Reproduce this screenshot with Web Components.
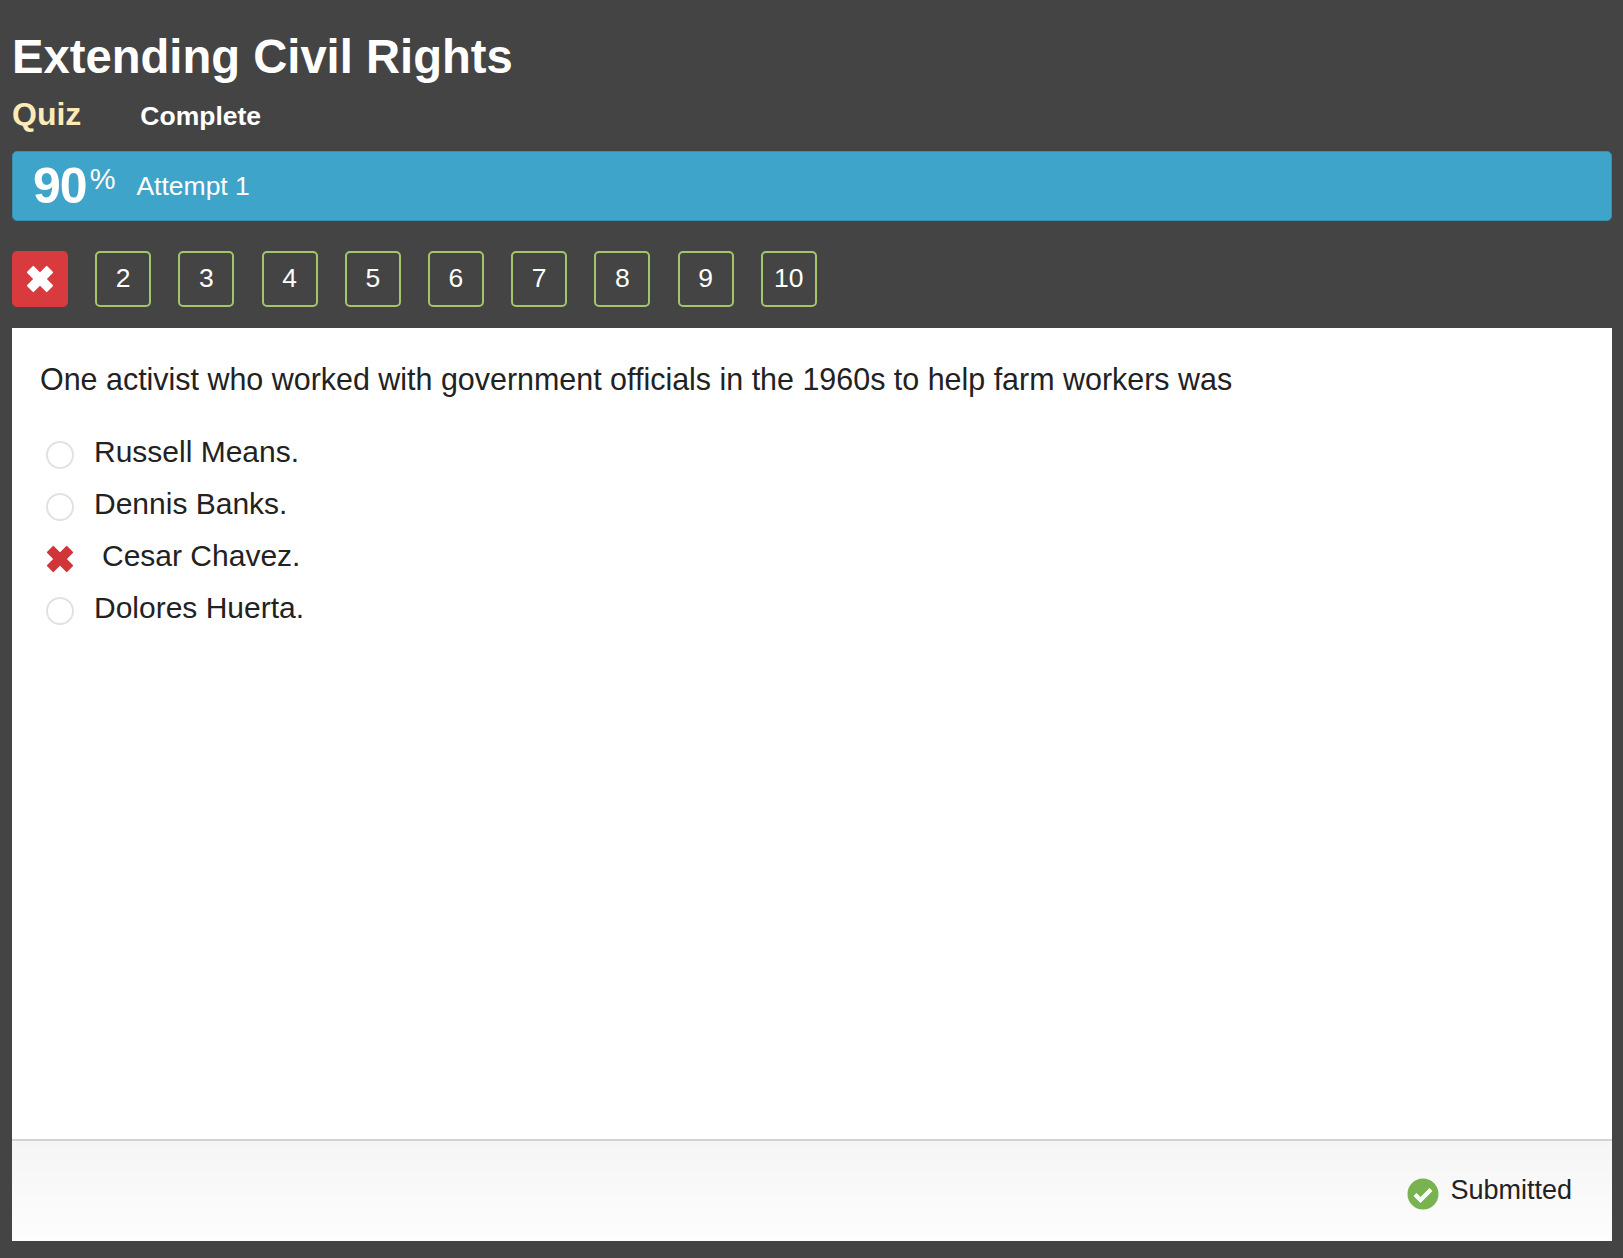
<!DOCTYPE html>
<html>
<head>
<meta charset="utf-8">
<style>
    html, body { margin: 0; background: #444444; }
    body { font-family: "Liberation Sans", Arial, sans-serif; }
</style>
</head>
<body>
<quiz-page>
    <quiz-header title="Extending Civil Rights"></quiz-header>
    <score-bar score="90" attempt="Attempt 1"></score-bar>
    <question-nav></question-nav>
    <question-card>
        <span slot="question">One activist who worked with government officials in the 1960s to help farm workers was</span>
        <answer-option>Russell Means.</answer-option>
        <answer-option>Dennis Banks.</answer-option>
        <answer-option wrong>Cesar Chavez.</answer-option>
        <answer-option>Dolores Huerta.</answer-option>
        <span slot="status">Submitted</span>
    </question-card>
</quiz-page>

<script>
// --- Shared icon ---
const crossIcon = color => `
    <svg viewBox="2.5 2.5 23 23" width="28" height="28" aria-hidden="true">
        <path d="M4 8.5 8.5 4 14 9.5 19.5 4 24 8.5 18.5 14 24 19.5 19.5 24 14 18.5 8.5 24 4 19.5 9.5 14Z"
              fill="${color}" stroke="${color}" stroke-width="1.5" stroke-linejoin="round"/>
    </svg>`;

// --- Page frame ---
class QuizPage extends HTMLElement {
    constructor() {
        super();
        this.attachShadow({ mode: 'open' });
        this.shadowRoot.innerHTML = `
            <style>
                :host {
                    display: block;
                    box-sizing: border-box;
                    height: 1258px;
                    padding: 0 11px 17px 12px;
                }
                .wrap {
                    height: 100%;
                    display: flex;
                    flex-direction: column;
                }
            </style>
            <div class="wrap"><slot></slot></div>
        `;
    }
}
customElements.define('quiz-page', QuizPage);

// --- Title and tabs ---
class QuizHeader extends HTMLElement {
    constructor() {
        super();
        this.attachShadow({ mode: 'open' });
    }

    connectedCallback() {
        this.shadowRoot.innerHTML = `
            <style>
                :host {
                    display: block;
                    padding-top: 29px;
                    height: 123px;
                    box-sizing: border-box;
                }
                h1 {
                    margin: 0;
                    font-size: 47.2px;
                    line-height: 56px;
                    font-weight: bold;
                    color: #fff;
                }
                .tabs {
                    display: flex;
                    align-items: baseline;
                    gap: 59px;
                    margin-top: 12px;
                    font-weight: bold;
                }
                .quiz { font-size: 32px; line-height: 34px; color: #fcebb6; }
                .complete { font-size: 26.5px; line-height: 34px; color: #fff; }
            </style>
            <h1>${this.getAttribute('title')}</h1>
            <div class="tabs">
                <span class="quiz">Quiz</span>
                <span class="complete">Complete</span>
            </div>
        `;
    }
}
customElements.define('quiz-header', QuizHeader);

// --- Blue score bar ---
class ScoreBar extends HTMLElement {
    constructor() {
        super();
        this.attachShadow({ mode: 'open' });
    }

    connectedCallback() {
        this.shadowRoot.innerHTML = `
            <style>
                :host {
                    display: flex;
                    align-items: center;
                    box-sizing: border-box;
                    height: 70px;
                    margin-top: 28px;
                    padding-left: 20px;
                    background: #3fa4c9;
                    border: 1px solid #3a8fb0;
                    border-radius: 5px;
                    color: #fff;
                }
                .score {
                    font-size: 50px;
                    font-weight: bold;
                    letter-spacing: -1px;
                    line-height: 1;
                }
                sup {
                    font-size: 29px;
                    font-weight: normal;
                    letter-spacing: 0;
                    line-height: 0;
                    vertical-align: 14px;
                    margin-left: 3px;
                }
                .attempt {
                    font-size: 26.5px;
                    margin-left: 21px;
                }
            </style>
            <span class="score">${this.getAttribute('score')}<sup>%</sup></span>
            <span class="attempt">${this.getAttribute('attempt')}</span>
        `;
    }
}
customElements.define('score-bar', ScoreBar);

// --- Numbered question squares ---
class QuestionNav extends HTMLElement {
    constructor() {
        super();
        this.attachShadow({ mode: 'open' });
    }

    connectedCallback() {
        let items = `<div class="item wrong">${crossIcon('#fff')}</div>`;
        for (let i = 2; i <= 10; i++) {
            items += `<div class="item">${i}</div>`;
        }
        this.shadowRoot.innerHTML = `
            <style>
                :host {
                    display: flex;
                    gap: 27.2px;
                    margin-top: 30px;
                }
                .item {
                    box-sizing: border-box;
                    width: 56px;
                    height: 56px;
                    display: flex;
                    align-items: center;
                    justify-content: center;
                    padding-bottom: 2px;
                    border: 2px solid #a4c66a;
                    border-radius: 5px;
                    color: #fff;
                    font-size: 26.5px;
                }
                .wrong {
                    background: #d83a3d;
                    border: 0;
                    padding-bottom: 0;
                }
            </style>
            ${items}
        `;
    }
}
customElements.define('question-nav', QuestionNav);

// --- One answer row ---
class AnswerOption extends HTMLElement {
    constructor() {
        super();
        this.attachShadow({ mode: 'open' });
    }

    connectedCallback() {
        const wrong = this.hasAttribute('wrong');
        const mark = wrong ? crossIcon('#d0353a') : '<span class="radio"></span>';
        this.shadowRoot.innerHTML = `
            <style>
                :host {
                    display: flex;
                    align-items: center;
                    height: 52px;
                    font-size: 30px;
                    color: #222;
                }
                .mark {
                    width: 28px;
                    height: 28px;
                    margin-left: 6px;
                    margin-top: 6px;
                    display: flex;
                }
                .radio {
                    box-sizing: border-box;
                    width: 28px;
                    height: 28px;
                    border: 2px solid #e2e2e2;
                    border-radius: 50%;
                }
                .label { margin-left: ${wrong ? 28 : 20}px; }
            </style>
            <span class="mark">${mark}</span>
            <span class="label"><slot></slot></span>
        `;
    }
}
customElements.define('answer-option', AnswerOption);

// --- White question panel with footer ---
class QuestionCard extends HTMLElement {
    constructor() {
        super();
        this.attachShadow({ mode: 'open' });
        this.shadowRoot.innerHTML = `
            <style>
                :host {
                    display: flex;
                    flex-direction: column;
                    flex: 1;
                    margin-top: 21px;
                    background: #fff;
                }
                .body {
                    flex: 1;
                    padding: 33px 28px 0;
                }
                .question {
                    font-size: 30.45px;
                    line-height: 36px;
                    color: #222;
                    margin-bottom: 29px;
                }
                .foot {
                    height: 102px;
                    box-sizing: border-box;
                    border-top: 2px solid #d2d2d2;
                    background: linear-gradient(#f5f5f5, #fdfdfd);
                    display: flex;
                    justify-content: flex-end;
                    align-items: center;
                    gap: 11px;
                    padding: 0 40px 0 0;
                    font-size: 27px;
                    color: #222;
                }
                .foot svg { margin-top: 5px; }
                .foot span { margin-top: -2px; }
            </style>
            <div class="body">
                <div class="question"><slot name="question"></slot></div>
                <slot></slot>
            </div>
            <div class="foot">
                <svg viewBox="0 0 32 32" width="32" height="32" aria-hidden="true">
                    <circle cx="16" cy="16" r="15.5" fill="#79b34f"/>
                    <path d="M8 16.5 13.5 22 24 11.5" fill="none" stroke="#fff" stroke-width="4.2"/>
                </svg>
                <span><slot name="status"></slot></span>
            </div>
        `;
    }
}
customElements.define('question-card', QuestionCard);
</script>
</body>
</html>
